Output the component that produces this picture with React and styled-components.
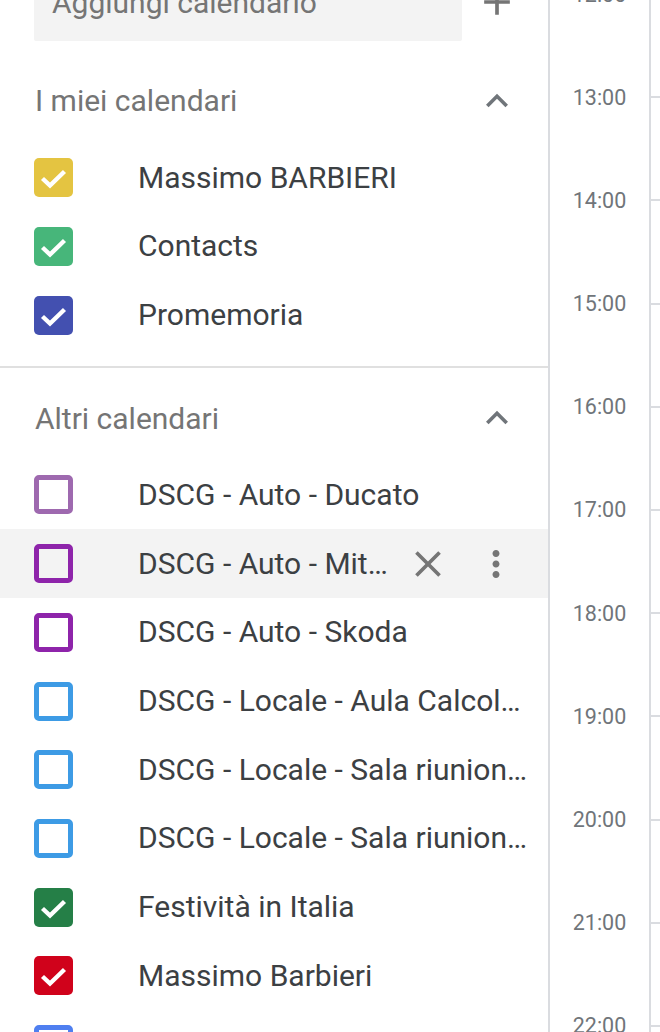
import styled, { createGlobalStyle } from "styled-components";
import { MdAdd, MdClose, MdExpandLess, MdMoreVert } from "react-icons/md";

const myCalendars = [
  { name: "Massimo BARBIERI", color: "#e4c441", checked: true },
  { name: "Contacts", color: "#47b67a", checked: true },
  { name: "Promemoria", color: "#4350b0", checked: true },
];

const otherCalendars = [
  { name: "DSCG - Auto - Ducato", color: "#9e69af" },
  { name: "DSCG - Auto - Mitsubishi", color: "#8e24aa", hover: true },
  { name: "DSCG - Auto - Skoda", color: "#8e24aa" },
  { name: "DSCG - Locale - Aula Calcolatori", color: "#3d9be5" },
  { name: "DSCG - Locale - Sala riunioni 1", color: "#3d9be5" },
  { name: "DSCG - Locale - Sala riunioni 2", color: "#3d9be5" },
  { name: "Festività in Italia", color: "#257f47", checked: true },
  { name: "Massimo Barbieri", color: "#d0021b", checked: true },
  { name: "Compleanni", color: "#4f7ff0" },
];

const hours = ["12:00", "13:00", "14:00", "15:00", "16:00", "17:00", "18:00", "19:00", "20:00", "21:00", "22:00"];

const GlobalStyle = createGlobalStyle`
  html, body {
    margin: 0;
    padding: 0;
    background: #fff;
  }
  body {
    font-family: Roboto, "Liberation Sans", Arial, sans-serif;
    overflow: hidden;
  }
`;

const CalendarCheck = ({ color, checked }) => (
  <Box $color={color} $checked={checked}>
    {checked && (
      <svg width="39" height="39" viewBox="0 0 39 39">
        <polyline
          points="8.5,20.5 16,27.5 30.5,13.5"
          fill="none"
          stroke="#fff"
          strokeWidth="4.4"
        />
      </svg>
    )}
  </Box>
);

const CalendarRow = ({ cal }) => (
  <Row $hover={cal.hover}>
    <CalendarCheck color={cal.color} checked={cal.checked} />
    <Label>{cal.name}</Label>
    {cal.hover && (
      <Actions>
        <IconButton $w={60}>
          <MdClose size={44} />
        </IconButton>
        <IconButton $w={64}>
          <MdMoreVert size={42} />
        </IconButton>
      </Actions>
    )}
  </Row>
);

const Section = ({ title, items }) => (
  <>
    <Header>
      <span>{title}</span>
      <MdExpandLess size={44} />
    </Header>
    <List>
      {items.map((c) => (
        <CalendarRow key={c.name} cal={c} />
      ))}
    </List>
  </>
);

const App = () => {
  return (
    <Page>
      <GlobalStyle />
      <Sidebar>
        <SearchRow>
          <SearchBox>Aggiungi calendario</SearchBox>
          <PlusIcon>
            <MdAdd size={44} />
          </PlusIcon>
        </SearchRow>
        <Section title="I miei calendari" items={myCalendars} />
        <Divider />
        <Section title="Altri calendari" items={otherCalendars} />
      </Sidebar>
      <TimeCol>
        <TimeInner>
          {hours.map((h) => (
            <Hour key={h}>{h}</Hour>
          ))}
        </TimeInner>
      </TimeCol>
      <Grid>
        {hours.map((h) => (
          <Cell key={h} />
        ))}
      </Grid>
    </Page>
  );
};

const Page = styled.div`
  display: flex;
  height: 1032px;
  overflow: hidden;
`;
const Sidebar = styled.aside`
  width: 548px;
  flex-shrink: 0;
  border-right: 2px solid #dadce0;
`;
const SearchRow = styled.div`
  display: flex;
  align-items: center;
  margin-top: -41px;
  padding-left: 34px;
`;
const SearchBox = styled.div`
  width: 428px;
  height: 82px;
  box-sizing: border-box;
  padding: 4px 18px 0;
  display: flex;
  align-items: center;
  background: #f3f3f3;
  border-radius: 0 0 2px 2px;
  color: #757575;
  font-size: 30px;
`;
const PlusIcon = styled.div`
  margin-left: 13px;
  display: flex;
  color: #757575;
  padding-top: 4px;
`;
const Header = styled.div`
  height: 68.7px;
  margin-top: 25.6px;
  padding: 0 29px 0 35px;
  display: flex;
  align-items: center;
  justify-content: space-between;
  color: #757575;
  font-size: 30px;
  svg {
    color: #70757a;
  }
`;
const List = styled.div`
  padding-top: 8px;
`;
const Divider = styled.div`
  height: 2px;
  background: #e0e0e0;
  margin: 16.6px 0 -9.6px;
`;
const Row = styled.div`
  height: 68.7px;
  display: flex;
  align-items: center;
  padding: 0 17px 0 34px;
  background: ${(p) => (p.$hover ? "#f3f3f3" : "transparent")};
`;
const Box = styled.div`
  width: 39px;
  height: 39px;
  flex-shrink: 0;
  box-sizing: border-box;
  border-radius: 5px;
  background: ${(p) => (p.$checked ? p.$color : "transparent")};
  border: ${(p) => (p.$checked ? "none" : `5px solid ${p.$color}`)};
  svg {
    display: block;
  }
`;
const Label = styled.span`
  flex: 1;
  min-width: 0;
  margin-left: 65px;
  padding-bottom: 1px;
  white-space: nowrap;
  overflow: hidden;
  text-overflow: ellipsis;
  color: #3c4043;
  font-size: 30px;
`;
const Actions = styled.div`
  display: flex;
  align-items: center;
  gap: 6px;
  margin-left: 4px;
  margin-right: 3px;
`;
const IconButton = styled.div`
  width: ${(p) => p.$w}px;
  height: 60px;
  display: flex;
  align-items: center;
  justify-content: center;
  color: #757575;
`;
const TimeCol = styled.div`
  width: 99px;
  flex-shrink: 0;
  border-right: 2px solid #dadce0;
  overflow: hidden;
`;
const TimeInner = styled.div`
  margin-top: -57.6px;
`;
const Hour = styled.div`
  height: 103.2px;
  display: flex;
  align-items: center;
  justify-content: center;
  color: #70757a;
  font-size: 21.5px;
`;
const Grid = styled.div`
  flex: 1;
  margin-top: -7px;
`;
const Cell = styled.div`
  height: 103.2px;
  box-sizing: border-box;
  border-top: 2px solid #dadce0;
`;

export default App;
